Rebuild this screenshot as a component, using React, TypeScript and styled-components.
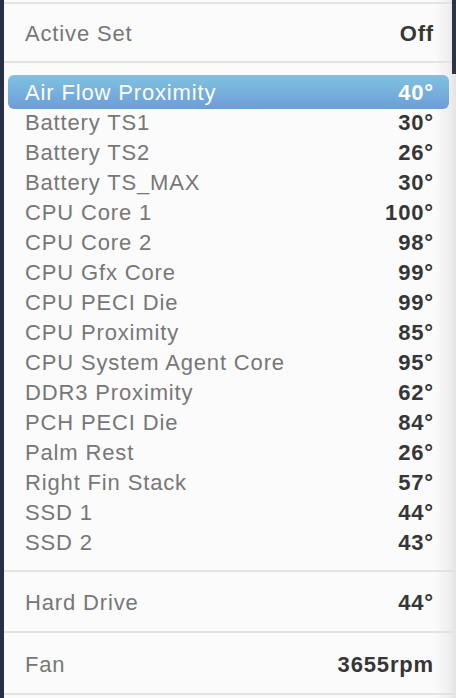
import styled, { createGlobalStyle } from "styled-components";

const GlobalStyle = createGlobalStyle`
  html, body {
    margin: 0;
    padding: 0;
    background: #283046;
    height: 100%;
    overflow: hidden;
  }
  #root {
    height: 100%;
  }
`;

const Panel = styled.div`
  position: relative;
  margin-left: 4px;
  height: 100%;
  padding-top: 2px;
  box-sizing: border-box;
  background: linear-gradient(
    to right,
    #fbfbfb 0,
    #fbfbfb calc(100% - 22px),
    #f0f0f0 calc(100% - 8px),
    #e4e4e4 100%
  );
  font-family: "Liberation Sans", Arial, Helvetica, sans-serif;
  font-size: 22px;
  letter-spacing: 0.85px;

  &::after {
    content: "";
    position: absolute;
    top: 0;
    right: 0;
    width: 4px;
    height: 74px;
    background: #2c3447;
  }
`;

const Section = styled.div<{ $h: number; $top?: boolean }>`
  display: flex;
  align-items: center;
  justify-content: space-between;
  box-sizing: border-box;
  height: ${(p) => p.$h}px;
  padding: 3px 22px 0 21px;
  border-top: ${(p) => (p.$top ? "2px solid #e3e3e3" : "none")};
  border-bottom: 2px solid #e3e3e3;
`;

const List = styled.div`
  display: flex;
  flex-direction: column;
  padding: 14px 0 13px;
  border-bottom: 2px solid #e3e3e3;
`;

const Row = styled.div<{ $active?: boolean }>`
  display: flex;
  align-items: center;
  justify-content: space-between;
  height: ${(p) => (p.$active ? 34 : 30)}px;
  margin: ${(p) => (p.$active ? "-2px 7px -2px 4px" : "0")};
  padding: ${(p) => (p.$active ? "1px 15px 0 17px" : "1px 22px 0 21px")};
  box-sizing: border-box;
  border-radius: 6px;
  background: ${(p) =>
    p.$active ? "linear-gradient(to bottom, #80c2e2, #6c9dd8)" : "transparent"};
  color: ${(p) => (p.$active ? "#ffffff" : "#777777")};
`;

const Label = styled.span`
  color: inherit;
`;

const Value = styled.span<{ $active?: boolean }>`
  font-weight: 700;
  color: ${(p) => (p.$active ? "#ffffff" : "#363636")};
`;

const HeadLabel = styled.span`
  color: #777777;
`;

const sensors: [string, string][] = [
  ["Air Flow Proximity", "40°"],
  ["Battery TS1", "30°"],
  ["Battery TS2", "26°"],
  ["Battery TS_MAX", "30°"],
  ["CPU Core 1", "100°"],
  ["CPU Core 2", "98°"],
  ["CPU Gfx Core", "99°"],
  ["CPU PECI Die", "99°"],
  ["CPU Proximity", "85°"],
  ["CPU System Agent Core", "95°"],
  ["DDR3 Proximity", "62°"],
  ["PCH PECI Die", "84°"],
  ["Palm Rest", "26°"],
  ["Right Fin Stack", "57°"],
  ["SSD 1", "44°"],
  ["SSD 2", "43°"],
];

const App = () => {
  return (
    <>
      <GlobalStyle />
      <Panel>
        <Section $h={61} $top>
          <HeadLabel>Active Set</HeadLabel>
          <Value>Off</Value>
        </Section>
        <List>
          {sensors.map(([name, temp], i) => (
            <Row key={name} $active={i === 0}>
              <Label>{name}</Label>
              <Value $active={i === 0}>{temp}</Value>
            </Row>
          ))}
        </List>
        <Section $h={61}>
          <HeadLabel>Hard Drive</HeadLabel>
          <Value>44°</Value>
        </Section>
        <Section $h={62}>
          <HeadLabel>Fan</HeadLabel>
          <Value>3655rpm</Value>
        </Section>
      </Panel>
    </>
  );
};

export default App;
